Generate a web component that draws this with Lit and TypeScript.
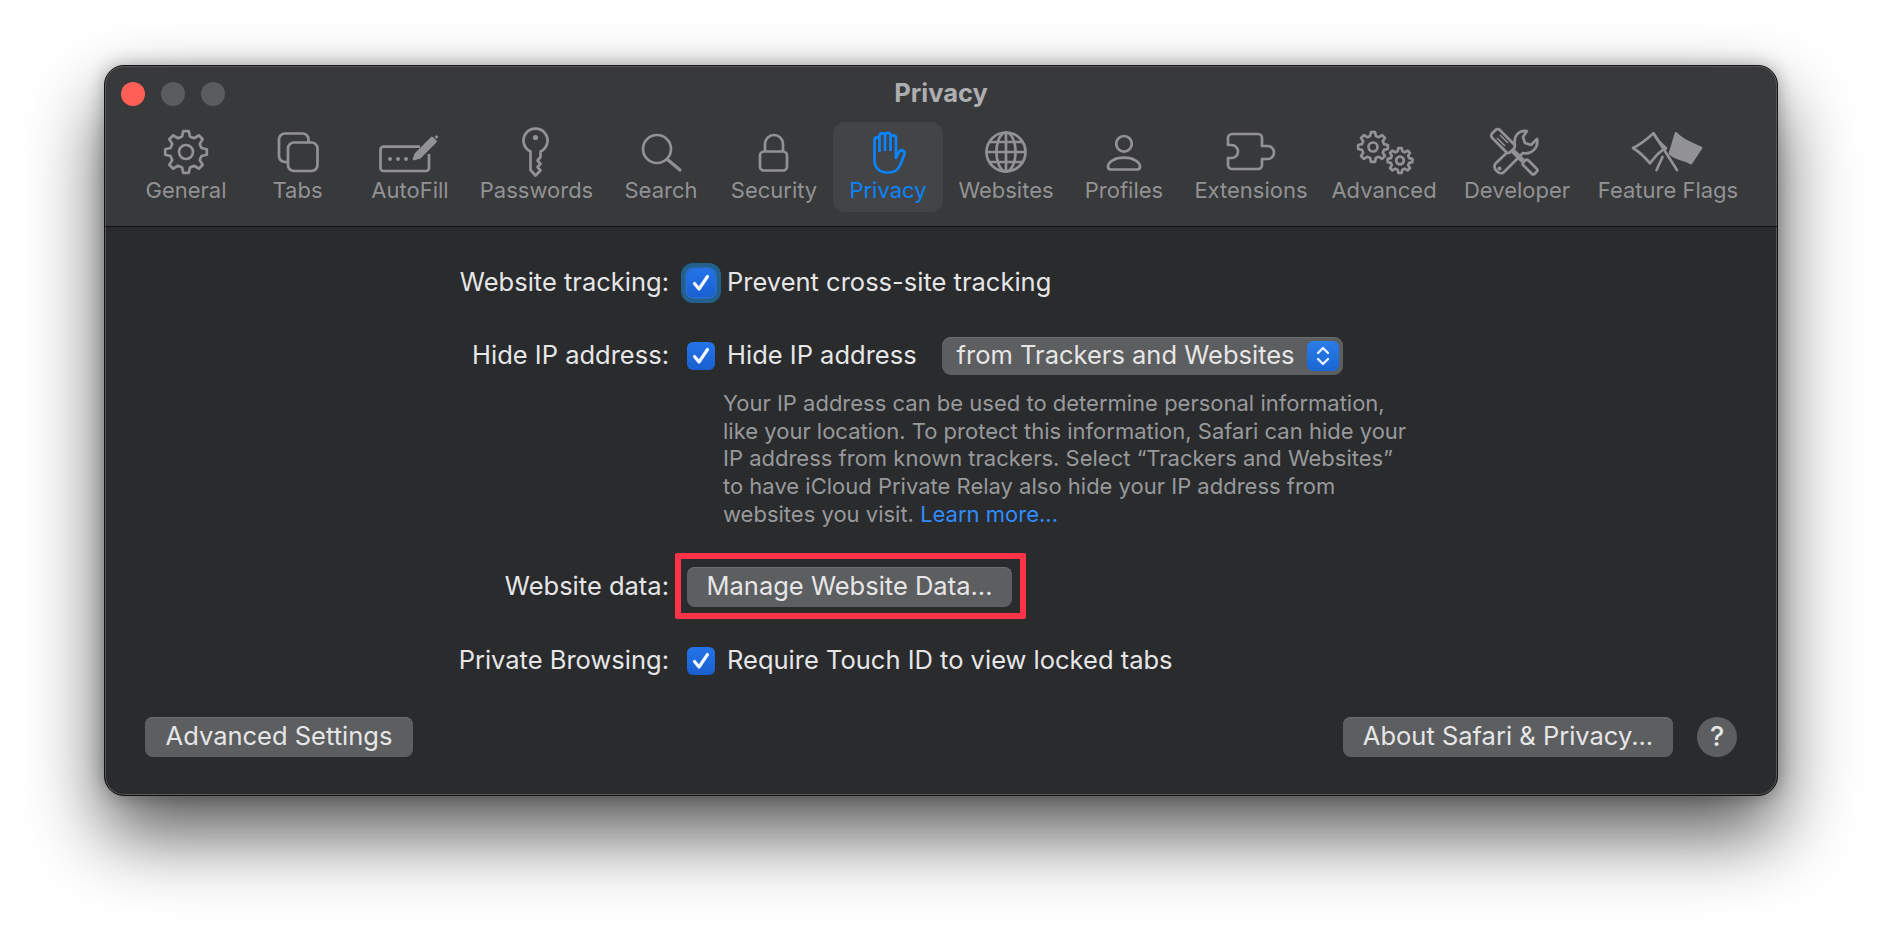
import { LitElement, css, html, svg } from 'lit';
import { customElement } from 'lit/decorators.js';

// builds a cog outline, used by General and Advanced
function gear(cx: number, cy: number, r: number, teeth = 8) {
  const inner = r * 0.76;
  const step = (Math.PI * 2) / teeth;
  let d = '';
  for (let i = 0; i < teeth; i++) {
    const a = i * step - Math.PI / 2;
    const pts = [
      [inner, a - step * 0.32],
      [r, a - step * 0.17],
      [r, a + step * 0.17],
      [inner, a + step * 0.32],
    ];
    for (const [rad, t] of pts) {
      const x = (cx + rad * Math.cos(t)).toFixed(2);
      const y = (cy + rad * Math.sin(t)).toFixed(2);
      d += `${d ? 'L' : 'M'}${x} ${y} `;
    }
  }
  return d + 'Z';
}

const ICONS: Record<string, unknown> = {
  General: svg`<path d=${gear(30, 28, 21)}/><circle cx="30" cy="28" r="7"/>`,
  Tabs: svg`
    <path d="M40.5 18.5V15.5a6 6 0 0 0-6-6H17a6 6 0 0 0-6 6V32a6 6 0 0 0 6 6h3"/>
    <rect x="20" y="18.5" width="29.5" height="28.5" rx="6"/>`,
  AutoFill: svg`
    <path d="M40 22.7H3.5a3 3 0 0 0-3 3V44a3 3 0 0 0 3 3H46a3 3 0 0 0 3-3V30"/>
    <path d="M34 35l2-5L52 14l3.5 3.5L39.5 33.5z" fill="currentColor"/>
    <path d="M55.5 14l2-2" />
    <g fill="currentColor" stroke="none">
      <circle cx="10" cy="35" r="2"/><circle cx="18" cy="35" r="2"/><circle cx="26" cy="35" r="2"/>
    </g>`,
  Passwords: svg`
    <path d="M23.5 27.5V46l5 5.5 5-5-3-3.5 3-3-3-3.5 3-3.5v-5.5A12 12 0 1 0 23.5 27.5z"/>
    <circle cx="28.5" cy="13.5" r="2.6" fill="currentColor" stroke="none"/>`,
  Search: svg`<circle cx="26" cy="25" r="14"/><path d="M36.5 35.5L49 46" stroke-linecap="round" stroke-width="3.2"/>`,
  Security: svg`
    <rect x="16" y="27.5" width="27" height="19" rx="4"/>
    <path d="M21 27.5V20a9 9 0 0 1 18 0v7.5"/>`,
  Privacy: svg`
    <path d="M16.5 34V16c0-3.4 5-3.4 5 0v12M21.5 27V12c0-3.6 5.5-3.6 5.5 0v15M27 27V11.500c0-3.600 5.500-3.600 5.500 0V27M32.500 27V14c0-3.500 5.500-3.500 5.500 0v20l3-6c1.700-3.200 6.500-1.500 5.500 2L42 41.500c-2.500 5-6 7-11 7h-2.500c-7 0-12-5-12-12V34"/>`,
  Websites: svg`
    <circle cx="30" cy="28" r="19.500"/>
    <ellipse cx="30" cy="28" rx="9.500" ry="19.500"/>
    <path d="M30 8.500v39M10.500 28h39M13.500 18h33M13.500 38h33"/>`,
  Profiles: svg`
    <circle cx="30" cy="19.800" r="7.800"/>
    <path d="M17 45.500h26c2 0 3-1 3-2.800 0-5-7-9-16-9s-16 4-16 9c0 1.800 1 2.800 3 2.800z"/>`,
  Extensions: svg`
    <path d="M41 22V14a4 4 0 0 0-4-4H11a4 4 0 0 0-4 4v7h3.500a6.500 6.500 0 0 1 0 13H7v7a4 4 0 0 0 4 4h26a4 4 0 0 0 4-4v-6h5.500a6.500 6.500 0 0 0 0-13z"/>`,
  Advanced: svg`
    <path d=${gear(19, 23, 15)}/><circle cx="19" cy="23" r="4.500"/>
    <path d=${gear(46, 36.5, 12.500)}/><circle cx="46" cy="36.500" r="3.800"/>`,
  Developer: svg`
    <path d="M8.500 39.500L28 21c-2-8 3-15 12-14l-4 6 2 6 6 2 6-6c2 9-6 16-14 14L17 48c-4 4-12-3-8.500-8.500z"/>
    <circle cx="12.500" cy="44.500" r="2" fill="currentColor" stroke="none"/>
    <g fill="#38393b" stroke-linejoin="round">
      <rect x="3" y="11.500" width="26" height="11" rx="3" transform="rotate(45 16 17)"/>
      <path d="M26 27l10 10" stroke-width="5"/>
      <rect x="35" y="39.500" width="16" height="7" rx="2" transform="rotate(45 43 43)"/>
    </g>
    <path d="M13 11l8 8M10 14l8 8" stroke-width="1.600"/>`,
  'Feature Flags': svg`
    <path d="M-5 24C2 21 8 16 15.500 9.300c3 6 8 11 12.500 15C21 27 17 33 12 39.300c-5-6-10-11-17-15.300z" stroke-linejoin="round"/>
    <path d="M15.500 9.300L39 46M24.500 33L18.500 46" stroke-linecap="round"/>
    <path d="M38 9.300c7 8 14 9 25 14.700L53 39c-8-5-14-3-21-9.500z" fill="currentColor" stroke-linejoin="round"/>`,
};

const TABS: [string, number][] = [
  ['General', 110],
  ['Tabs', 113],
  ['AutoFill', 112],
  ['Passwords', 141],
  ['Search', 108],
  ['Security', 118],
  ['Privacy', 110],
  ['Websites', 126],
  ['Profiles', 110],
  ['Extensions', 144],
  ['Advanced', 122],
  ['Developer', 144],
  ['Feature Flags', 158],
];

const CHECK = html`<svg viewBox="0 0 28 28" width="28" height="28">
  <path d="M7.500 14.500l4.500 5.500 8.500-12.500" fill="none" stroke="#f2f6ff" stroke-width="3.200" stroke-linecap="round" stroke-linejoin="round"/>
</svg>`;

@customElement('app-root')
export class AppRoot extends LitElement {
  static styles = css`
    :host {
      display: block;
      height: 934px;
      background: #fff;
      padding: 65px 0 0 104px;
      box-sizing: border-box;
      overflow: hidden;
      font-family: Inter, 'Liberation Sans', sans-serif;
    }

    .window {
      width: 1674px;
      height: 731px;
      box-sizing: border-box;
      border-radius: 20px;
      background: #2a2b2d;
      border: 1px solid #111;
      box-shadow: inset 0 0 0 1px #59595b, 0 38px 76px rgba(0, 0, 0, 0.66), 0 0 18px rgba(0, 0, 0, 0.3);
      display: flex;
      flex-direction: column;
      overflow: hidden;
      color: #e6e6e7;
      font-size: 25.500px;
    }

    .toolbar {
      height: 160px;
      flex: none;
      background: #38393b;
      border-bottom: 1px solid #111;
      border-radius: 19px 19px 0 0;
      box-shadow: inset 0 1px 0 #59595b, inset 1px 0 0 #59595b, inset -1px 0 0 #59595b;
    }

    .titlebar {
      height: 56px;
      display: flex;
      align-items: center;
      padding-left: 16px;
      position: relative;
    }

    .lights {
      display: flex;
      gap: 16px;
    }

    .lights i {
      width: 24px;
      height: 24px;
      border-radius: 50%;
      background: #5b5c5e;
    }

    .lights i:first-child {
      background: #ff5f57;
    }

    .title {
      position: absolute;
      inset: 0 0 4px;
      display: flex;
      align-items: center;
      justify-content: center;
      font-size: 25.500px;
      font-weight: 700;
      color: #aeaeb0;
    }

    .tabs {
      display: flex;
      padding-left: 26px;
    }

    .tab {
      flex: none;
      height: 90px;
      border-radius: 12px;
      display: flex;
      flex-direction: column;
      align-items: center;
      color: #929294;
      font-size: 22px;
      white-space: nowrap;
    }

    .tab svg {
      width: 60px;
      height: 56px;
      margin-top: 2px;
      overflow: visible;
      fill: none;
      stroke: currentColor;
      stroke-width: 2.700;
      stroke-linejoin: round;
    }

    .tab span {
      line-height: 24px;
      margin-top: -2px;
    }

    .tab.on {
      background: #434446;
      color: #0a84ff;
    }

    .body {
      flex: 1;
      display: flex;
      flex-direction: column;
      padding: 36px 40px 0;
      min-height: 0;
    }

    .row {
      display: grid;
      grid-template-columns: 524px 1fr;
      grid-template-rows: 100%;
      column-gap: 18px;
      align-items: center;
    }

    .label {
      text-align: right;
    }

    .t {
      display: block;
      padding-bottom: 3px;
    }

    .field {
      display: flex;
      align-items: center;
    }

    .box {
      width: 28px;
      height: 28px;
      border-radius: 6px;
      background: linear-gradient(#2374e8, #1a5fd0);
      flex: none;
      margin-right: 12px;
    }

    .box svg {
      display: block;
    }

    .focus {
      height: 40px;
    }

    .focus .box {
      box-shadow: 0 0 0 1.500px #2b6fd6, 0 0 0 6px #24608d;
    }

    .mt-select {
      margin-top: 34px;
      height: 38px;
    }

    .select {
      margin-left: 25px;
      width: 401px;
      height: 38px;
      box-sizing: border-box;
      border-radius: 9px;
      background: #5d5e60;
      display: flex;
      align-items: center;
      justify-content: space-between;
      padding: 0 4px 0 15px;
      box-shadow: inset 0 1px 0 #6c6d6f;
    }

    .stepper {
      width: 32px;
      height: 30px;
      border-radius: 6px;
      background: linear-gradient(#2a7de8, #1a66d4);
      display: flex;
      align-items: center;
      justify-content: center;
    }

    .help {
      margin: 15px 0 0 578px;
      font-size: 22px;
      line-height: 27.700px;
      color: #98999b;
      white-space: nowrap;
    }

    .help a {
      color: #2f8cff;
    }

    .mt-manage {
      margin-top: 38px;
      height: 40px;
    }

    .btn {
      height: 40px;
      box-sizing: border-box;
      display: inline-flex;
      align-items: center;
      justify-content: center;
      border-radius: 8px;
      background: #5d5e60;
      box-shadow: inset 0 1px 0 #6c6d6f;
      white-space: nowrap;
    }

    .marked {
      position: relative;
      width: 325px;
    }

    .marked::after {
      content: '';
      position: absolute;
      inset: -14px -14px -12px -12px;
      border: 6px solid #ff3347;
      border-radius: 2px;
    }

    .mt-private {
      margin-top: 40px;
      height: 28px;
    }

    .footer {
      margin-top: 42px;
      display: flex;
      align-items: center;
    }

    .adv {
      width: 268px;
    }

    .about {
      width: 330px;
      margin-left: auto;
    }

    .help-btn {
      width: 40px;
      height: 40px;
      margin-left: 24px;
      border-radius: 50%;
      background: #5d5e60;
      display: flex;
      align-items: center;
      justify-content: center;
      font-size: 27px;
      font-weight: 500;
    }
  `;

  render() {
    return html`
      <div class="window">
        <div class="toolbar">
          <div class="titlebar">
            <div class="lights"><i></i><i></i><i></i></div>
            <div class="title">Privacy</div>
          </div>
          <div class="tabs">
            ${TABS.map(
              ([name, w]) => html`
                <div class="tab ${name === 'Privacy' ? 'on' : ''}" style="width:${w}px">
                  <svg viewBox="0 0 60 56">${ICONS[name]}</svg>
                  <span>${name}</span>
                </div>
              `
            )}
          </div>
        </div>
        <div class="body">
          <div class="row focus">
            <div class="label t">Website tracking:</div>
            <div class="field"><div class="box">${CHECK}</div><span class="t">Prevent cross-site tracking</span></div>
          </div>
          <div class="row mt-select">
            <div class="label t">Hide IP address:</div>
            <div class="field">
              <div class="box">${CHECK}</div>
              <span class="t">Hide IP address</span>
              <div class="select">
                <span class="t">from Trackers and Websites</span>
                <div class="stepper">
                  <svg viewBox="0 0 16 22" width="16" height="22" fill="none" stroke="#e8f0ff" stroke-width="2.400" stroke-linecap="round" stroke-linejoin="round">
                    <path d="M3 8L8 3l5 5M3 14l5 5 5-5"/>
                  </svg>
                </div>
              </div>
            </div>
          </div>
          <div class="help">
            Your IP address can be used to determine personal information,<br />
            like your location. To protect this information, Safari can hide your<br />
            IP address from known trackers. Select “Trackers and Websites”<br />
            to have iCloud Private Relay also hide your IP address from<br />
            websites you visit. <a>Learn more...</a>
          </div>
          <div class="row mt-manage">
            <div class="label t">Website data:</div>
            <div class="field"><div class="btn marked"><span class="t">Manage Website Data...</span></div></div>
          </div>
          <div class="row mt-private">
            <div class="label t">Private Browsing:</div>
            <div class="field"><div class="box">${CHECK}</div><span class="t">Require Touch ID to view locked tabs</span></div>
          </div>
          <div class="footer">
            <div class="btn adv"><span class="t">Advanced Settings</span></div>
            <div class="btn about"><span class="t">About Safari &amp; Privacy...</span></div>
            <div class="help-btn">?</div>
          </div>
        </div>
      </div>
    `;
  }
}
